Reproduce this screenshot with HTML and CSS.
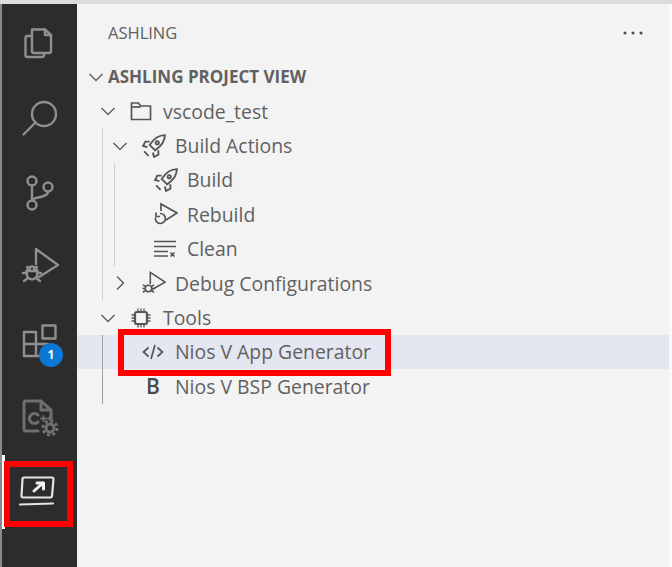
FILE: index.html
```html
<!DOCTYPE html>
<html lang="en">
<head>
    <meta charset="UTF-8">
    <title>Ashling Project View</title>
    <link rel="stylesheet" href="styles.css">
</head>
<body>
    <div class="topbar"></div>
    <div class="workbench">
        <nav class="activity">
            <div class="act-item">
                <svg width="40" height="40" viewBox="0 0 40 40" class="act-icon"><path d="M12 7.500h13l6 5.500v16a2 2 0 0 1-2 2H14a2 2 0 0 1-2-2z" /><path d="M25 7.500V13h6" /><path d="M12 14H7.500a2 2 0 0 0-2 2v17a2 2 0 0 0 2 2H22a2 2 0 0 0 2-2v-2" /></svg>
            </div>
            <div class="act-item">
                <svg width="40" height="40" viewBox="0 0 40 40" class="act-icon"><circle cx="24" cy="17" r="12" /><path d="M15.500 25.500L3.500 37.500" /></svg>
            </div>
            <div class="act-item">
                <svg width="40" height="40" viewBox="0 0 40 40" class="act-icon"><circle cx="12" cy="9" r="4.500" /><circle cx="12" cy="33" r="4.500" /><circle cx="28" cy="15" r="4.500" /><path d="M12 13.500v15M28 19.500c0 7-16 5-16 9" /></svg>
            </div>
            <div class="act-item">
                <svg width="40" height="40" viewBox="0 0 40 40" class="act-icon"><path d="M16 18V3l22 16-19 12" /><ellipse cx="12" cy="27" rx="5.500" ry="6.500" /><path d="M7 21l3 2M17 21l-3 2M3 27h4M17 27h4M4 35l4-3M20 35l-4-3M6.500 25h11" /></svg>
            </div>
            <div class="act-item act-ext">
                <svg width="40" height="40" viewBox="0 0 40 40" class="act-icon"><path d="M4 11h12v12H4zM4 23h12v12H4zM16 23h12v12H16z" /><path d="M22.500 4.500h13v13h-13z" /></svg>
                <span class="badge">1</span>
            </div>
            <div class="act-item act-cpp">
                <svg width="44" height="44" viewBox="0 0 44 44" class="act-icon act-dim"><path d="M20 33H8a2 2 0 0 1-2-2V5a2 2 0 0 1 2-2h15l10 9v7" /><path d="M23 3v9h10" /><path d="M20 17a5 5 0 1 0 0 7" /><path d="M23 20.500h5M25.500 18v5M30 20.500h4M32 18.500v4" class="act-thin" /><circle cx="32" cy="30" r="4" class="act-gear" /><circle cx="32" cy="30" r="7" stroke-dasharray="3 2.500" class="act-teeth" /></svg>
            </div>
            <div class="act-item act-current">
                <span class="active-mark"></span>
                <svg width="40" height="40" viewBox="0 0 40 40" class="act-icon act-bright"><path d="M6 6.500h28a1.500 1.500 0 0 1 1.500 1.500l-1.500 17a1.500 1.500 0 0 1-1.500 1.500H5a1.500 1.500 0 0 1-1.500-1.500L4.500 8A1.500 1.500 0 0 1 6 6.500z" /><path d="M16 20l9-8" class="act-arrow" /><path d="M19 12h6.500v6" class="act-arrow" /><path d="M2 33.500l33-1" /></svg>
                <span class="callout callout-act"></span>
            </div>
        </nav>

        <main class="panel">
            <div class="panel-head">
                <span class="panel-title">ASHLING</span>
                <svg class="more" width="20" height="4" viewBox="0 0 20 4"><circle cx="2" cy="2" r="1.500" /><circle cx="10" cy="2" r="1.500" /><circle cx="18" cy="2" r="1.500" /></svg>
            </div>
            <div class="section-head">
                <svg class="chev" width="20" height="20" viewBox="0 0 20 20"><path d="M3.500 7l6.500 6.500L16.500 7" /></svg>
                <span>ASHLING PROJECT VIEW</span>
            </div>

            <div class="tree">
                <div class="row">
                    <svg class="chev" width="20" height="20" viewBox="0 0 20 20"><path d="M3.500 7l6.500 6.500L16.500 7" /></svg>
                    <svg class="ico" width="22" height="22" viewBox="0 0 22 22"><path d="M1.500 3h7l2 3h10v13.500h-19z" /><path d="M1.500 7h9" /></svg>
                    <span>vscode_test</span>
                </div>
                <div class="group">
                    <div class="row">
                        <svg class="chev" width="20" height="20" viewBox="0 0 20 20"><path d="M3.500 7l6.500 6.500L16.500 7" /></svg>
                        <svg class="ico ico-wide" width="24" height="24" viewBox="0 0 22 22"><path d="M21 1c-6 0-10 3-14 9l5 5c6-4 9-8 9-14z" /><circle cx="14" cy="8" r="1.500" /><path d="M7 7H3l-2 4 4 1M15 15v4l-4 2-1-4M2 16l4 4" /></svg>
                        <span>Build Actions</span>
                    </div>
                    <div class="group">
                        <div class="row">
                            <span class="spacer"></span>
                            <svg class="ico ico-wide" width="24" height="24" viewBox="0 0 22 22"><path d="M21 1c-6 0-10 3-14 9l5 5c6-4 9-8 9-14z" /><circle cx="14" cy="8" r="1.500" /><path d="M7 7H3l-2 4 4 1M15 15v4l-4 2-1-4M2 16l4 4" /></svg>
                            <span>Build</span>
                        </div>
                        <div class="row">
                            <span class="spacer"></span>
                            <svg class="ico ico-wide" width="24" height="24" viewBox="0 0 24 24"><path d="M7 9V2l16 9-11 7" /><path d="M6 11.500a5 5 0 1 1-4.500 4" /><path d="M2 10.500v4h4" /></svg>
                            <span>Rebuild</span>
                        </div>
                        <div class="row">
                            <span class="spacer"></span>
                            <svg class="ico" width="22" height="22" viewBox="0 0 22 22"><path d="M0 3.500h22M0 8.500h22M0 13.500h14M0 18h14M16.500 14.500l4 4M20.500 14.500l-4 4" /></svg>
                            <span>Clean</span>
                        </div>
                    </div>
                    <div class="row">
                        <svg class="chev" width="20" height="20" viewBox="0 0 20 20"><path d="M7 3.500l6.500 6.500L7 16.500" /></svg>
                        <svg class="ico ico-wide" width="26" height="26" viewBox="0 0 26 26"><path d="M9 14V1.500l16 10.500-14 8" /><circle cx="7" cy="19" r="3.500" /><path d="M1 15l3 2M13 15l-3 2M1 23l3-2M13 23l-3-2M0.500 19h3M10.500 19h3" /></svg>
                        <span>Debug Configurations</span>
                    </div>
                </div>
                <div class="row">
                    <svg class="chev" width="20" height="20" viewBox="0 0 20 20"><path d="M3.500 7l6.500 6.500L16.500 7" /></svg>
                    <svg class="ico ico-chip" width="22" height="22" viewBox="0 0 22 22"><rect x="5" y="5" width="12" height="12" rx="2" /><path d="M8 1.500V5M11 1.500V5M14 1.500V5M8 17v3.500M11 17v3.500M14 17v3.500M1.500 8H5M1.500 11H5M1.500 14H5M17 8h3.500M17 11h3.500M17 14h3.500" class="ico-pins" /></svg>
                    <span>Tools</span>
                </div>
                <div class="group group-dark">
                    <div class="row row-selected">
                        <span class="spacer"></span>
                        <svg class="ico" width="22" height="22" viewBox="0 0 22 22"><path d="M6.500 6.500L1.500 11l5 4.500M15.500 6.500l5 4.500-5 4.500M13 4l-4 14" /></svg>
                        <span>Nios V App Generator</span>
                        <span class="callout callout-row"></span>
                    </div>
                    <div class="row">
                        <span class="spacer"></span>
                        <span class="ico-letter">B</span>
                        <span>Nios V BSP Generator</span>
                    </div>
                </div>
            </div>
        </main>
    </div>
</body>
</html>
```

FILE: styles.css
```css
* {
    box-sizing: border-box;
}

html, body {
    margin: 0;
    height: 100%;
    overflow: hidden;
}

body {
    background-color: #f3f3f3;
    font-family: "Open Sans", "Noto Sans", Arial, sans-serif;
    color: #616161;
}

.topbar {
    height: 4px;
    background-color: #dcdcdc;
}

.workbench {
    display: flex;
    height: 563px;
}

.activity {
    width: 77px;
    flex-shrink: 0;
    display: flex;
    flex-direction: column;
    padding-top: 16px;
    background-color: #2c2c2c;
    border-left: 2px solid #8a8a8a;
}

.act-item {
    position: relative;
    height: 74.500px;
    display: flex;
    justify-content: center;
    padding-top: 2px;
}

.act-item:first-child {
    height: 75px;
}

.act-item.act-cpp {
    height: 61.500px;
    padding-top: 5px;
}

.act-icon {
    fill: none;
    stroke: #8f8f8f;
    stroke-width: 2.400;
    stroke-linejoin: round;
    stroke-linecap: round;
}

.act-dim {
    stroke: #6f6f6f;
    stroke-width: 3;
}

.act-thin {
    stroke-width: 1.800;
}

.act-gear {
    stroke-width: 3;
}

.act-teeth {
    stroke-width: 3;
    stroke-linecap: butt;
}

.act-bright {
    stroke: #e4e4e4;
    stroke-width: 2.200;
    margin-right: 3px;
}

.act-arrow {
    stroke: #f2f2f2;
    stroke-width: 3;
}

.act-current {
    padding-top: 16px;
}

.active-mark {
    position: absolute;
    left: 0;
    top: 0;
    bottom: 0;
    width: 3px;
    background-color: #ffffff;
}

.badge {
    position: absolute;
    left: 37px;
    top: 24px;
    width: 24px;
    height: 24px;
    border-radius: 50%;
    background-color: #0a78d4;
    color: white;
    font-size: 12px;
    font-weight: 700;
    line-height: 24px;
    text-align: center;
}

.callout {
    position: absolute;
    border: 6px solid #ff0000;
    pointer-events: none;
}

.callout-act {
    left: 2px;
    top: 6px;
    width: 69px;
    height: 66px;
}

.callout-row {
    left: 8px;
    top: -6px;
    width: 273px;
    height: 47px;
}

.panel {
    flex: 1;
    min-width: 0;
    border-right: 3px solid #fafafa;
}

.panel-head {
    display: flex;
    justify-content: space-between;
    align-items: center;
    height: 57px;
    padding: 0 26px 0 31px;
}

.panel-title {
    font-size: 16.500px;
}

.more {
    fill: #4a4a4a;
}

.section-head {
    display: flex;
    align-items: center;
    gap: 2px;
    height: 31px;
    padding-left: 9px;
    font-size: 17px;
    font-weight: 700;
}

.chev {
    flex-shrink: 0;
    fill: none;
    stroke: #616161;
    stroke-width: 1.500;
}

.tree {
    padding-left: 21px;
    font-size: 19.400px;
    margin-top: 2px;
}

.row {
    position: relative;
    display: flex;
    align-items: center;
    height: 34.400px;
    white-space: nowrap;
}

.row .chev {
    margin-right: 12px;
}

.spacer {
    width: 32px;
    flex-shrink: 0;
}

.ico {
    width: 22px;
    margin-right: 11px;
    flex-shrink: 0;
    fill: none;
    stroke: #555555;
    stroke-width: 1.700;
}

.ico-wide {
    width: 24px;
    margin-right: 9px;
}

.ico-chip rect {
    stroke-width: 2.200;
}

.ico-pins {
    stroke-width: 1.300;
}

.ico-letter {
    width: 22px;
    margin-right: 11px;
    flex-shrink: 0;
    text-align: center;
    font-size: 21px;
    font-weight: 600;
    color: #4a4a4a;
}

.group {
    margin-left: 4px;
    padding-left: 7px;
    border-left: 1px solid #d0d0d0;
}

.group-dark {
    border-left-color: #a0a0a0;
}

.row-selected::before {
    content: "";
    position: absolute;
    left: -33px;
    right: 0;
    top: 0;
    bottom: 0;
    background-color: #e4e6f1;
    z-index: -1;
}
```
